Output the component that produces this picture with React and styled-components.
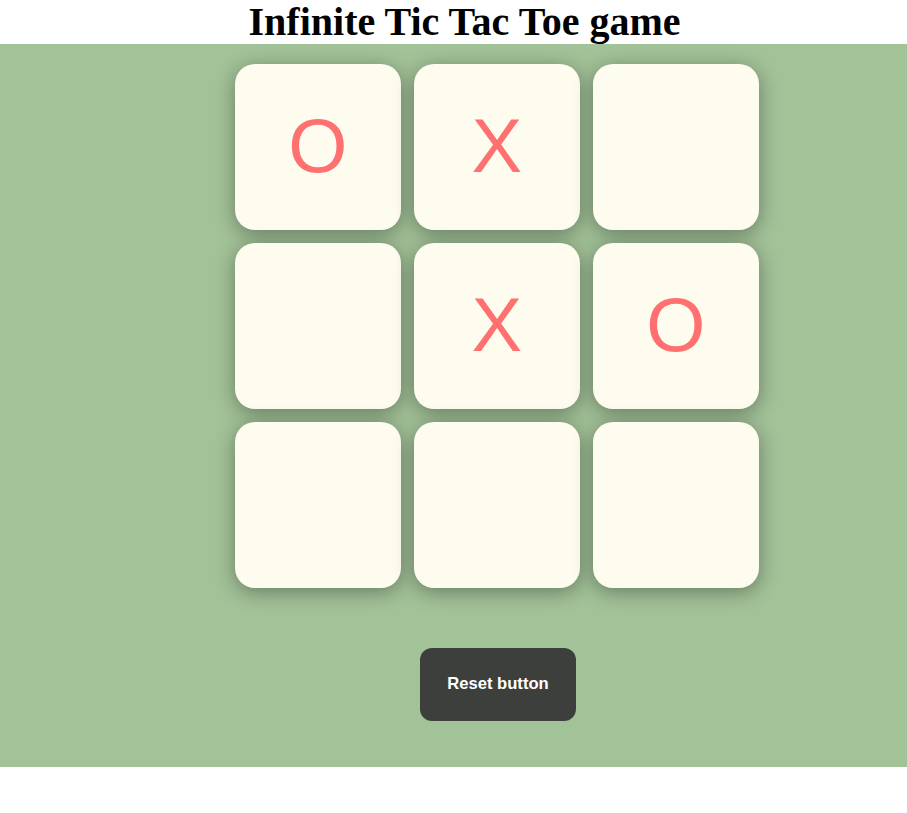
import React, { useState } from 'react';
import styled, { createGlobalStyle } from 'styled-components';

const GlobalStyle = createGlobalStyle`
    body {
        margin: 0;
        background: #ffffff;
        font-family: "Liberation Serif", "Times New Roman", serif;
    }
`;

const Title = styled.h1`
    margin: 0;
    height: 44px;
    font-size: 40px;
    line-height: 44px;
    text-align: center;
    padding-left: 22px;
    color: #000;
`;

const Board = styled.main`
    background: #a2c298;
    height: 723px;
    box-sizing: border-box;
    padding: 20px 0 0 87px;
    display: flex;
    flex-direction: column;
    align-items: center;
`;

const Grid = styled.div`
    display: grid;
    grid-template-columns: repeat(3, 165.5px);
    grid-auto-rows: 165.5px;
    gap: 13.5px;
    margin-left: -0.5px;
`;

const Cell = styled.button`
    border: none;
    border-radius: 20px;
    background: #fefcee;
    box-shadow: 0 4px 20px rgba(0, 0, 0, 0.36);
    display: flex;
    align-items: center;
    justify-content: center;
    font-family: "Liberation Sans", Arial, sans-serif;
    font-size: 76px;
    color: #ff7070;
    cursor: pointer;
    padding: 0 0 2px;
`;

const ResetButton = styled.button`
    margin: 60px 0 0 2px;
    width: 156px;
    height: 73px;
    border: none;
    border-radius: 12px;
    background: #3c3f3c;
    color: #ffffff;
    font-family: "Liberation Sans", Arial, sans-serif;
    font-weight: bold;
    font-size: 16.6px;
    cursor: pointer;
`;

const start = ['O', 'X', '', '', 'X', 'O', '', '', ''];

export default function App() {
    const [cells, setCells] = useState(start);

    return (
        <>
            <GlobalStyle />
            <Title>Infinite Tic Tac Toe game</Title>
            <Board>
                <Grid>
                    {cells.map((v, i) => (
                        <Cell key={i}>{v}</Cell>
                    ))}
                </Grid>
                <ResetButton onClick={() => setCells(Array(9).fill(''))}>Reset button</ResetButton>
            </Board>
        </>
    );
}
